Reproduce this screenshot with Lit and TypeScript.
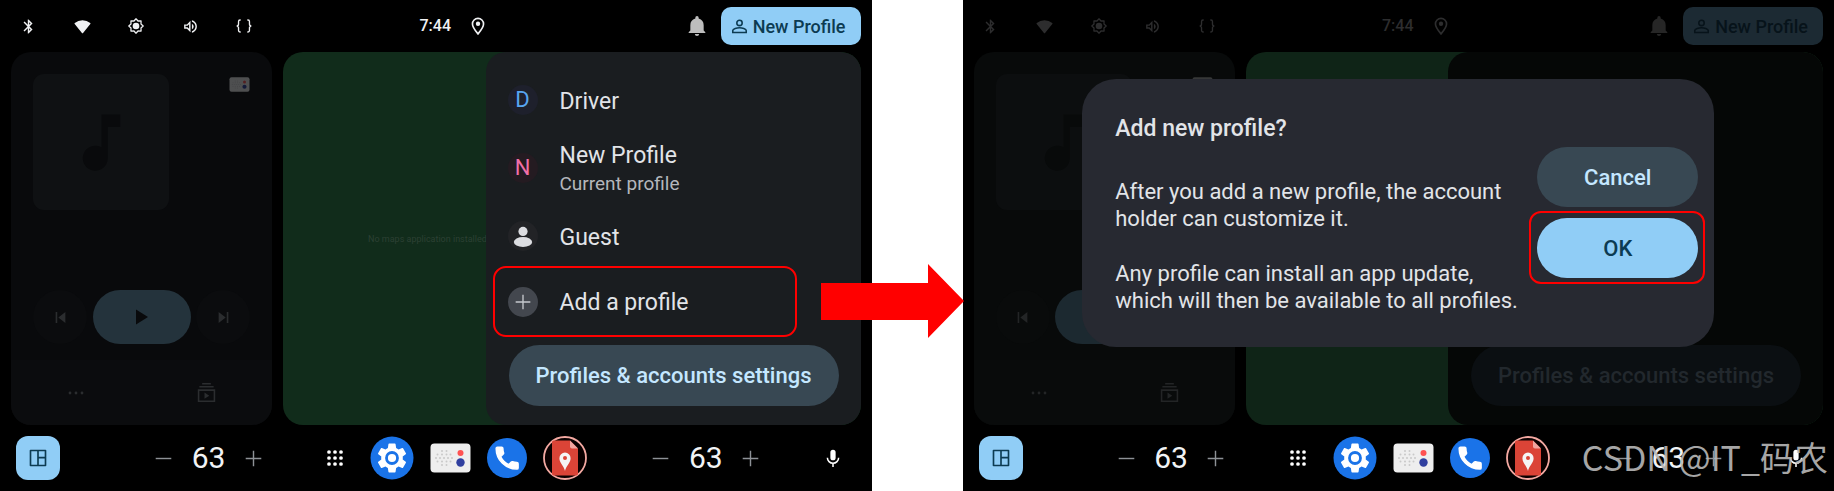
import { LitElement, html, svg, css, nothing, TemplateResult } from "lit";
import { customElement, property } from "lit/decorators.js";

const icon = (size: number, body: TemplateResult, h = size, box = "0 0 24 24") =>
  html`<svg width=${size} height=${h} viewBox=${box} fill="currentColor" aria-hidden="true">${body}</svg>`;

const bluetooth = svg`<path d="M17.71 7.71 12 2h-1v7.59L6.41 5 5 6.41 10.59 12 5 17.59 6.41 19 11 14.41V22h1l5.71-5.71-4.3-4.29 4.3-4.29zM13 5.83l1.88 1.88L13 9.59V5.83zm1.88 10.46L13 18.17v-3.76l1.88 1.88z"/>`;
const wifi = svg`<path d="M12 21.5a1 1 0 0 1-.8-.4L1 8.6a1 1 0 0 1 .1-1.4A16.5 16.5 0 0 1 22.9 7.2a1 1 0 0 1 .1 1.4L12.8 21.1a1 1 0 0 1-.8.4z"/>`;
const brightness = svg`<path fill="none" stroke="currentColor" stroke-width="1.9" stroke-linejoin="round" d="M12 1.2 15 4.5 19.6 4.4 19.5 9 22.8 12 19.5 15 19.6 19.6 15 19.5 12 22.8 9 19.5 4.4 19.6 4.5 15 1.2 12 4.5 9 4.4 4.4 9 4.5z"/><circle cx="12" cy="12" r="5"/>`;
const volume = svg`<path d="M3 9v6h4l5 5V4L7 9H3zm7-.17v6.34L7.83 13H5v-2h2.83L10 8.83zM16.5 12A4.5 4.5 0 0 0 14 7.97v8.05A4.47 4.47 0 0 0 16.5 12zM14 3.23v2.06c2.89.86 5 3.54 5 6.71s-2.11 5.85-5 6.71v2.06c4.01-.91 7-4.49 7-8.77s-2.99-7.86-7-8.77z"/>`;
const braces = svg`<path fill="none" stroke="currentColor" stroke-width="2" d="M7 3H6q-2.2 0-2.2 2.2V9q0 3-2.8 3q2.8 0 2.8 3v3.8Q3.8 21 6 21h1M17 3h1q2.2 0 2.2 2.2V9q0 3 2.8 3q-2.8 0-2.8 3v3.8Q20.2 21 18 21h-1"/>`;
const pin = svg`<path fill="none" stroke="currentColor" stroke-width="2.2" d="M12 22.5C7 16.5 4.6 12.7 4.6 9.2a7.4 7.4 0 0 1 14.8 0c0 3.5-2.4 7.3-7.4 13.3z"/><circle cx="12" cy="9" r="2.9"/>`;
const bell = svg`<path d="M12 24a2.6 2.6 0 0 0 2.6-2.5H9.4A2.6 2.6 0 0 0 12 24zM20 17.5V11c0-4-2-7-6-8V2a2 2 0 0 0-4 0v1C6 4 4 7 4 11v6.5L2 19.5V20.5h20v-1z"/>`;
const person = svg`<circle cx="12" cy="7" r="3.8" fill="none" stroke="currentColor" stroke-width="2.2"/><path fill="none" stroke="currentColor" stroke-width="2.2" d="M2.5 20.5v-2.7c0-2.7 6-4 9.5-4s9.5 1.3 9.5 4v2.7z"/>`;
const guest = svg`<circle cx="12" cy="7" r="5"/><ellipse cx="12" cy="18.5" rx="10" ry="5.5"/>`;
const plus = svg`<path d="M11 1h2v10h10v2h-10v10h-2v-10H1v-2h10z"/>`;
const minus = svg`<path d="M1 11h22v2H1z"/>`;
const note = svg`<path d="M12 3v10.55A4 4 0 1 0 14 17V7h4V3z"/>`;
const play = svg`<path d="M4 2v20l16-10z"/>`;
const prev = svg`<path d="M3 2h3v20H3zM21 2v20L8 12z"/>`;
const next = svg`<path d="M18 2h3v20h-3zM3 2v20l13-10z"/>`;
const dots = svg`<circle cx="3" cy="12" r="2.1"/><circle cx="12" cy="12" r="2.1"/><circle cx="21" cy="12" r="2.1"/>`;
const queue = svg`<path fill="none" stroke="currentColor" stroke-width="2" d="M6.5 1h11M3 4.8h18M2 9h20v14H2z"/><path d="m9.5 12 6 4-6 4z"/>`;
const widgets = svg`<path fill="none" stroke="currentColor" stroke-width="2.2" stroke-linejoin="round" d="M2 2h20v20H2zM12 2v20M12 11.5h10"/>`;
const grid = svg`${[3, 12, 21].map((y) => [3, 12, 21].map((x) => svg`<circle cx=${x} cy=${y} r="2.8"/>`))}`;
const mic = svg`<path d="M12 15a3.5 3.5 0 0 0 3.5-3.5v-7a3.5 3.5 0 0 0-7 0v7A3.5 3.5 0 0 0 12 15z"/><path fill="none" stroke="currentColor" stroke-width="2" d="M4.5 11.5a7.5 7.5 0 0 0 15 0M12 19v5"/>`;
const gear = svg`<path d="M19.14 12.94c.04-.3.06-.61.06-.94 0-.32-.02-.64-.07-.94l2.03-1.58a.49.49 0 0 0 .12-.61l-1.92-3.32a.488.488 0 0 0-.59-.22l-2.39.96c-.5-.38-1.03-.7-1.62-.94l-.36-2.54a.484.484 0 0 0-.48-.41h-3.84c-.24 0-.43.17-.47.41l-.36 2.54c-.59.24-1.13.57-1.62.94l-2.39-.96c-.22-.08-.47 0-.59.22L2.74 8.87c-.12.21-.08.47.12.61l2.03 1.58c-.05.3-.09.63-.09.94s.02.64.07.94l-2.03 1.58a.49.49 0 0 0-.12.61l1.92 3.32c.12.22.37.29.59.22l2.39-.96c.5.38 1.03.7 1.62.94l.36 2.54c.05.24.24.41.48.41h3.84c.24 0 .44-.17.47-.41l.36-2.54c.59-.24 1.13-.56 1.62-.94l2.39.96c.22.08.47 0 .59-.22l1.92-3.32c.12-.22.07-.47-.12-.61l-2.01-1.58z"/>`;
const handset = svg`<path fill="#fff" stroke="#fff" stroke-width="1.2" stroke-linejoin="round" d="M20 15.5c-1.25 0-2.45-.2-3.57-.57a1.02 1.02 0 0 0-1.02.24l-2.2 2.2a15.045 15.045 0 0 1-6.59-6.59l2.2-2.21a.96.96 0 0 0 .25-1A11.36 11.36 0 0 1 8.5 4c0-.55-.45-1-1-1H4c-.55 0-1 .45-1 1 0 9.39 7.61 17 17 17 .55 0 1-.45 1-1v-3.5c0-.55-.45-1-1-1z"/>`;

const radioRows: Array<[number, number[]]> = [
  [8, [12, 16.5]],
  [11.5, [7.5, 12, 16.5, 20.5]],
  [15, [6, 10, 14, 18, 22]],
  [18.5, [7.5, 12, 16.5, 20.5]],
  [22, [12, 16.5]],
];
const settingsApp = svg`<circle cx="22" cy="22" r="21.5" fill="#1a73e8"/><g transform="translate(4 4) scale(1.5)" fill="#fff">${gear}</g><circle cx="22" cy="22" r="5.5" fill="#fff" stroke="#1a73e8" stroke-width="2.8"/>`;
const radioApp = svg`<rect x=".5" y=".5" width="40" height="29" rx="4" fill="#eeeeee"/>${radioRows.map(([y, xs]) => xs.map((x) => svg`<circle cx=${x} cy=${y} r="1" fill="#c9c9c9"/>`))}<circle cx="30.5" cy="10" r="3" fill="#ff5252"/><circle cx="30.5" cy="19.5" r="4.2" fill="#303f9f"/>`;
const phoneApp = svg`<circle cx="20" cy="20" r="20" fill="#1a73e8"/><g transform="translate(5.5 5.5) scale(1.22)">${handset}</g>`;
const mapApp = svg`<circle cx="22" cy="22" r="21" fill="#0a0000" stroke="#f4a9a2" stroke-width="1.8"/><path fill="#db4437" d="M9 6.5q0-2 2-2h16l8 8v25q0 2-2 2H11q-2 0-2-2z"/><path fill="#f1a59f" d="m27 4.5 8 8h-6q-2 0-2-2z"/><path fill="#f5f5f5" d="M22 35c-1-5-5.6-8-5.6-12.8a5.6 5.6 0 0 1 11.2 0C27.6 27 23 30 22 35z"/><circle cx="22" cy="22" r="2" fill="#db4437"/>`;

@customElement("temp-control")
export class TempControl extends LitElement {
  @property({ type: Number }) value = 63;

  static styles = css`
    :host { display: flex; align-items: center; gap: 14px; color: #8d9196; }
    svg { display: block; }
    button { all: unset; display: grid; place-items: center; width: 28px; height: 32px; cursor: pointer; }
    output { font-size: 30px; line-height: 36px; color: #f1f3f5; }
  `;

  render() {
    return html`
      <button aria-label="Cooler" @click=${() => this.value--}>${icon(17, minus)}</button>
      <output>${this.value}</output>
      <button aria-label="Warmer" @click=${() => this.value++}>${icon(17, plus)}</button>
    `;
  }
}

@customElement("car-screen")
export class CarScreen extends LitElement {
  @property({ type: Boolean, reflect: true }) dialog = false;

  static styles = css`
    :host {
      --status: #f0f1f3; --bell: #bdbdbd; --chip: #90cdf6; --chip-ink: #0c3b52;
      --card: #090a0c; --card-foot: #0b0c0e; --art: #0f1113; --art-ink: #090a0c;
      --map: #112c1b; --panel: #1a1d20; --pill: #24333c; --ghost: #2b2d2f;
      --settings: #384853; --settings-ink: #c4e7ff; --mini: 0.3;
      position: relative; display: flex; flex-direction: column; min-width: 0;
      background: #000; color: #e2e4e8;
    }
    :host([dialog]) {
      --status: #2d2d2e; --bell: #262626; --chip: #1c2a33; --chip-ink: #07131a;
      --card: #080a0a; --card-foot: #090b0b; --art: #0c0e0f; --art-ink: #080a0a;
      --map: #0f2417; --panel: #050706; --pill: #1c2930; --ghost: #232526;
      --settings: #0b0f12; --settings-ink: #22282d; --mini: 0.2;
    }
    svg { display: block; }
    button { all: unset; box-sizing: border-box; cursor: pointer; }
    .status { display: grid; grid-template-columns: 1fr auto 1fr; align-items: center; height: 52px; padding: 0 11px; box-sizing: border-box; color: var(--status); }
    .quick { display: flex; gap: 30px; padding-left: 5px; }
    .quick button { display: grid; place-items: center; width: 24px; height: 24px; }
    .clock { display: flex; align-items: center; gap: 18px; padding-left: 35px; font-size: 16px; font-weight: 500; line-height: 20px; }
    .account { display: flex; align-items: center; justify-content: flex-end; gap: 14px; }
    .bell { color: var(--bell); }
    .chip { display: flex; align-items: center; gap: 5px; height: 38px; padding: 0 15px 0 10px; border-radius: 10px; background: var(--chip); color: var(--chip-ink); font-size: 18px; font-weight: 500; white-space: nowrap; }
    .main { flex: 1; display: grid; grid-template-columns: 261px 1fr; gap: 11px; padding: 0 11px; }
    .media { display: flex; flex-direction: column; border-radius: 20px; overflow: hidden; background: var(--card); color: var(--ghost); }
    .track { display: flex; justify-content: space-between; align-items: flex-start; padding: 22px 22px 0; }
    .art { display: grid; place-items: center; width: 136px; height: 136px; border-radius: 11px; background: var(--art); color: var(--art-ink); }
    .source { margin-top: 3px; opacity: var(--mini); }
    .transport { display: flex; justify-content: space-between; margin: auto 22px 16px; }
    .transport button { display: grid; place-items: center; width: 54px; height: 54px; border-radius: 27px; background: var(--card-foot); }
    .transport .play { width: 98px; background: var(--pill); color: #090a0c; }
    .more { display: grid; grid-template-columns: 1fr 1fr; place-items: center; height: 65px; background: var(--card-foot); }
    .map { display: flex; border-radius: 20px; overflow: hidden; background: var(--map); }
    .notice { flex: 1; min-width: 0; align-self: center; margin: 0; padding-left: 85px; overflow: hidden; white-space: nowrap; font-size: 9px; line-height: 12px; color: #2c4033; }
    .panel { display: flex; flex-direction: column; justify-content: flex-end; width: 375px; min-height: 373px; box-sizing: border-box; padding: 14px 0 19px; border-radius: 20px; background: var(--panel); }
    .user { display: flex; align-items: center; gap: 22px; height: 68px; margin: 0 68px 0 11px; padding-left: 11px; font-size: 23px; line-height: 28px; border-radius: 9px; }
    .label { padding-top: 3px; }
    .user small { display: block; font-size: 19px; line-height: 28px; color: #b4b7bc; }
    .avatar { display: grid; place-items: center; width: 30px; height: 30px; border-radius: 50%; font-size: 22px; }
    .driver { background: #1e202c; color: #58a6f0; }
    .fresh { background: #241b21; color: #f06fa8; }
    .anon { background: #222326; color: #dcdde1; }
    .add { background: #43474e; color: #c6c9ce; }
    .user.marked { height: 63px; outline: 2px solid #f00; outline-offset: 2px; }
    .settings { height: 61px; margin: 12px 22px 0 23px; border-radius: 31px; background: var(--settings); color: var(--settings-ink); text-align: center; font-size: 22px; font-weight: 500; line-height: 61px; }
    .dock { display: flex; align-items: center; justify-content: space-between; height: 66px; padding: 0 29px 0 16px; }
    .dock .home + temp-control { margin-left: 30px; }
    .home { display: grid; place-items: center; width: 44px; height: 44px; border-radius: 12px; background: #90cdf6; color: #0c3b52; }
    .apps { display: flex; align-items: center; gap: 16px; color: #fff; }
    .apps .all { margin-right: 11px; }
    .mic { color: #fff; }
    .dialog { position: absolute; top: 79px; left: 50%; transform: translateX(-50%); display: flex; align-items: flex-start; justify-content: space-between; width: 632px; box-sizing: border-box; padding: 36px 16px 33px 33px; border-radius: 34px; background: #272931; color: #e2e4e8; }
    .copy { font-size: 22px; line-height: 27px; }
    .copy h2 { margin: 0 0 36px; font-size: 23px; line-height: 27px; font-weight: 500; }
    .copy p { width: 404px; margin: 0 0 28px; }
    .copy p:last-child { margin: 0; }
    .actions { display: flex; flex-direction: column; gap: 11px; padding-top: 32px; }
    .actions button { width: 161px; height: 60px; border-radius: 30px; background: #384853; color: #c4e7ff; text-align: center; font-size: 22px; font-weight: 500; }
    .actions .ok { background: #90cdf6; color: #0c3b52; }
    .ring { position: relative; }
    .ring::after { content: ""; position: absolute; inset: -7px -7px -6px -8px; border: 2px solid #f00; border-radius: 12px; pointer-events: none; }
    .ring button { display: block; }
  `;

  private users() {
    return html`
      <button class="user"><span class="avatar driver">D</span><span class="label">Driver</span></button>
      <button class="user"><span class="avatar fresh">N</span><span class="label">New Profile<small>Current profile</small></span></button>
      <button class="user"><span class="avatar anon">${icon(22, guest)}</span><span class="label">Guest</span></button>
      <button class="user marked"><span class="avatar add">${icon(16, plus)}</span><span class="label">Add a profile</span></button>
    `;
  }

  private confirm() {
    return html`
      <div class="dialog" role="dialog" aria-labelledby="title">
        <div class="copy">
          <h2 id="title">Add new profile?</h2>
          <p>After you add a new profile, the account holder can customize it.</p>
          <p>Any profile can install an app update, which will then be available to all profiles.</p>
        </div>
        <div class="actions">
          <button>Cancel</button>
          <div class="ring"><button class="ok">OK</button></div>
        </div>
      </div>
    `;
  }

  render() {
    return html`
      <header class="status">
        <div class="quick">
          <button aria-label="Bluetooth">${icon(17, bluetooth)}</button>
          <button aria-label="Wi-Fi">${icon(17, wifi)}</button>
          <button aria-label="Brightness">${icon(16, brightness)}</button>
          <button aria-label="Volume">${icon(17, volume)}</button>
          <button aria-label="Developer tools">${icon(16, braces)}</button>
        </div>
        <div class="clock"><time>7:44</time>${icon(18, pin)}</div>
        <div class="account">
          <button class="bell" aria-label="Notifications">${icon(20, bell)}</button>
          <button class="chip">${icon(17, person)}New Profile</button>
        </div>
      </header>
      <main class="main">
        <section class="media">
          <div class="track">
            <div class="art">${icon(75, note)}</div>
            <div class="source">${icon(21, radioApp, 15, "0 0 41 30")}</div>
          </div>
          <div class="transport">
            <button aria-label="Previous">${icon(13, prev)}</button>
            <button class="play" aria-label="Play">${icon(18, play)}</button>
            <button aria-label="Next">${icon(13, next)}</button>
          </div>
          <div class="more">
            <button aria-label="More">${icon(16, dots)}</button>
            <button aria-label="Queue">${icon(19, queue)}</button>
          </div>
        </section>
        <section class="map">
          <p class="notice">${this.dialog ? nothing : "No maps application installed"}</p>
          <div class="panel">
            ${this.dialog ? nothing : this.users()}
            <button class="settings">Profiles &amp; accounts settings</button>
          </div>
        </section>
      </main>
      <footer class="dock">
        <button class="home" aria-label="Home">${icon(18, widgets)}</button>
        <temp-control></temp-control>
        <div class="apps">
          <button class="all" aria-label="All apps">${icon(16, grid)}</button>
          <button aria-label="Settings">${icon(44, settingsApp, 44, "0 0 44 44")}</button>
          <button aria-label="Radio">${icon(41, radioApp, 30, "0 0 41 30")}</button>
          <button aria-label="Phone">${icon(40, phoneApp, 40, "0 0 40 40")}</button>
          <button aria-label="Maps">${icon(44, mapApp, 44, "0 0 44 44")}</button>
        </div>
        <temp-control></temp-control>
        <button class="mic" aria-label="Voice">${icon(18, mic)}</button>
      </footer>
      ${this.dialog ? this.confirm() : nothing}
    `;
  }
}

@customElement("app-root")
export class AppRoot extends LitElement {
  static styles = css`
    :host { position: relative; display: grid; grid-template-columns: 1fr 91px 1fr; min-height: 100vh; overflow: hidden; background: #fff; font-family: Roboto, "Noto Sans", sans-serif; }
    .step { position: relative; z-index: 1; display: grid; }
    .arrow { position: absolute; top: 264px; left: -51px; display: block; }
    .watermark { position: absolute; right: 6px; bottom: 9px; font: 400 34px/50px "Noto Sans CJK SC", sans-serif; color: #b8b8b8; opacity: 0.9; }
  `;

  render() {
    return html`
      <car-screen></car-screen>
      <div class="step">
        <svg class="arrow" width="143" height="74" viewBox="0 0 143 74" aria-hidden="true"><path fill="#f00" d="M0 19h107V0l36 37-36 37V56H0z" /></svg>
      </div>
      <car-screen dialog></car-screen>
      <span class="watermark">CSDN @IT_码农</span>
    `;
  }
}
